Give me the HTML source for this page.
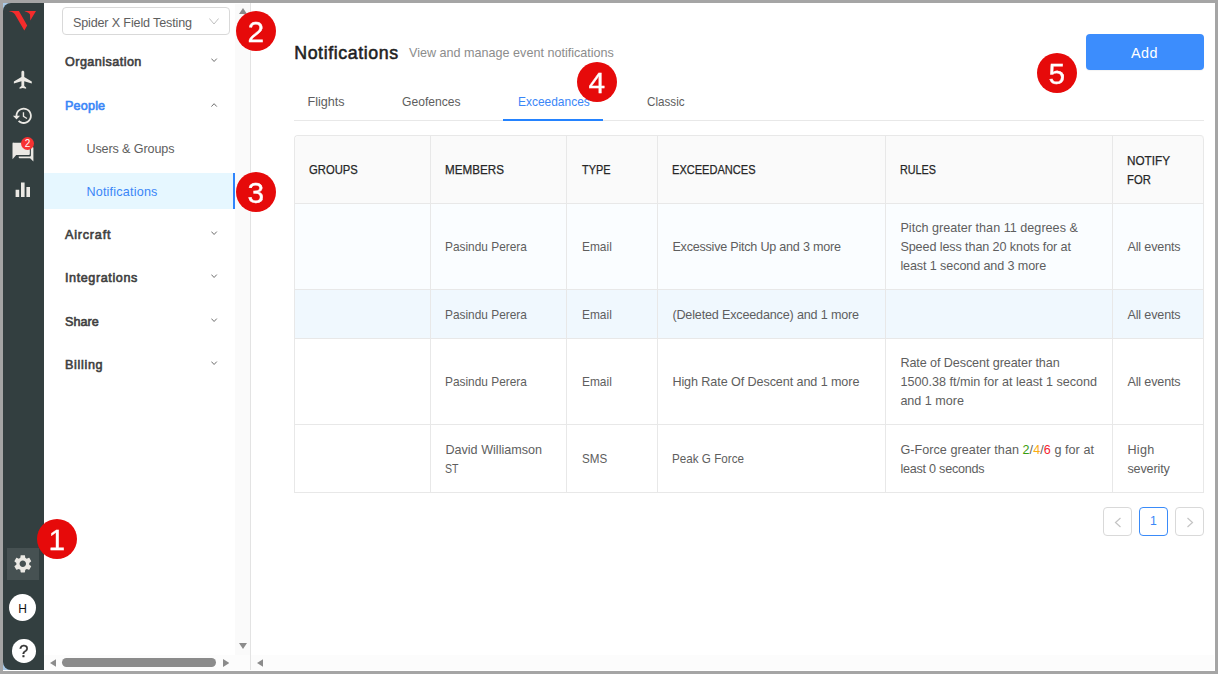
<!DOCTYPE html>
<html lang="en">
<head>
<meta charset="utf-8">
<title>Notifications</title>
<style>
*{box-sizing:border-box;margin:0;padding:0}
html,body{width:1218px;height:674px;overflow:hidden;background:#a5a5a5}
body{position:relative;font-family:"Liberation Sans",Arial,sans-serif;font-size:12.6px;line-height:18px;color:#5e5e5e}
.win{position:absolute;left:3px;top:3px;width:1212px;height:668px;background:#fff;overflow:hidden}
.pg{position:absolute;left:-3px;top:-3px;width:1218px;height:674px}
h1.t{-webkit-text-stroke:.55px #1f1f1f}
strong.t{-webkit-text-stroke:.6px currentColor}
.t{position:absolute;white-space:nowrap;line-height:18px;font-weight:400;font-size:12.6px;margin:0}
/* dark icon rail */
.cornerbg{position:absolute;left:3px;top:3px;width:12px;height:667px;background:#a8c9e6}
.rail{position:absolute;left:3px;top:3px;width:41px;height:667px;background:#333f40;border-radius:8px 0 0 8px}
.ic{position:absolute;fill:#ebe9e4}
.gearbox{position:absolute;left:7px;top:548px;width:32px;height:32px;background:#465152}
.badge{position:absolute;left:20.9px;top:136.7px;width:13.4px;height:13.4px;border-radius:50%;background:#f83232;color:#fff;font-size:10px;line-height:13.6px;text-align:center}
.ava{position:absolute;left:9px;top:594px;width:27px;height:27px;border-radius:50%;background:#fff;color:#111;font-size:12px;line-height:31px;text-align:center}
.help{will-change:transform;position:absolute;left:11.8px;top:638.7px;width:23.5px;height:23.5px;border-radius:50%;background:#fff;color:#333;font-size:17px;line-height:25px;text-align:center;-webkit-text-stroke:.3px #333}
/* side menu */
.menu{position:absolute;left:44px;top:3px;width:191px;height:652px;background:#fff}
.select{position:absolute;left:62px;top:7px;width:168px;height:28px;border:1px solid #d9d9d9;border-radius:4px;background:#fff}
.sel{position:absolute;left:44px;top:173px;width:191px;height:36px;background:#e6f7ff}
.selbar{position:absolute;left:233px;top:173px;width:2px;height:36px;background:#2f84fc}
.chev{position:absolute;fill:none;stroke:#666;stroke-width:.95}
ul{list-style:none}
/* scrollbars */
.vtrack{position:absolute;left:235px;top:4px;width:15px;height:666px;background:#fafafa}
.htrack{position:absolute;left:44px;top:655px;width:206px;height:15px;background:#fcfcfc}
.htrack2{position:absolute;left:251px;top:655px;width:963px;height:15px;background:#fcfcfc}
.thumb{position:absolute;left:62px;top:658px;width:154px;height:9px;border-radius:5px;background:#8b8b8b}
.arr{position:absolute;fill:#8b8b8b}
.divider{position:absolute;left:250px;top:3px;width:1px;height:667px;background:#e3e3e3}
/* numbered callouts */
.co{will-change:transform;position:absolute;width:40px;height:40px;border-radius:50%;background:#e60a0a;color:#fff;font-size:29.9px;line-height:40px;text-align:center;-webkit-text-stroke:.3px #fff}
.co i{display:block;font-style:normal;transform:translate(-.15px,.55px)}
/* main */
.tabline{position:absolute;left:294px;top:120px;width:910px;height:1px;background:#e8e8e8}
.ink{position:absolute;left:503px;top:119px;width:100px;height:2px;background:#2483ff}
.btn{position:absolute;left:1086px;top:34px;width:118px;height:36px;border-radius:4px;background:#3c8dfd;box-shadow:0 1px 1px rgba(0,0,0,.05)}
table{position:absolute;left:294px;top:135px;width:910px;border-collapse:separate;border-spacing:0;table-layout:fixed;border-left:1px solid #e8e8e8;border-top:1px solid #e8e8e8;border-radius:4px 4px 0 0}
th,td{border-right:1px solid #e8e8e8;border-bottom:1px solid #e8e8e8;padding:2px 0 0 14.4px;text-align:left;vertical-align:middle;font-weight:400;line-height:18.9px;white-space:nowrap;font-size:12.6px}
th{background:#fafafa;color:#262626;font-size:12.9px;-webkit-text-stroke:.25px #262626}
th:nth-child(3),td:nth-child(3){padding-left:15px}
th:first-child{border-top-left-radius:4px}
th:last-child{border-top-right-radius:4px}
tr.r1 td{background:#fafdff}
tr.r2 td{background:#f0f8fe}
.pgb{position:absolute;top:507px;width:29px;height:29px;border:1px solid #d9d9d9;border-radius:4px;background:#fff}
.pgb.on{border-color:#3a8bf9}
.pgb svg{position:absolute;left:9px;top:8.5px;fill:none;stroke:#c4c4c4;stroke-width:1.2}
b{font-weight:400}
.g{color:#389e0d}.o{color:#faad14}.r{color:#f5222d}
</style>
</head>
<body>
<div class="win"><div class="pg">

<!-- ICON RAIL -->
<div class="cornerbg"></div>
<nav>
<div class="rail"></div>
<svg class="ic" style="left:3px;top:3px" width="41" height="40" viewBox="0 0 41 40"><path fill="#f52c2c" d="M6.2 7.9h9.7l8.3 14.500-2.900 5.200-9.300-16.200q-1.200-2.200-5.800-3.200zM21.700 7.900h11.300l-5.700 9.500-.3-5.800q-.8-1.900-5.300-3.300z"/></svg>
<svg class="ic" style="left:12.2px;top:68.9px" width="22.6" height="21.6" viewBox="0 0 24 24" preserveAspectRatio="none"><path d="M21 16v-2l-8-5V3.500c0-.83-.67-1.500-1.500-1.500S10 2.670 10 3.500V9l-8 5v2l8-2.500V19l-2 1.500V22l3.500-1 3.500 1v-1.500L13 19v-5.500l8 2.500z"/></svg>
<svg class="ic" style="left:12.4px;top:105px" width="21.6" height="21.6" viewBox="0 0 24 24"><path d="M13 3c-4.970 0-9 4.030-9 9H1l3.890 3.890.07.140L9 12H6c0-3.870 3.130-7 7-7s7 3.130 7 7-3.130 7-7 7c-1.930 0-3.680-.79-4.940-2.060l-1.420 1.420C8.270 19.990 10.510 21 13 21c4.970 0 9-4.030 9-9s-4.030-9-9-9zm-1 5v5l4.280 2.540.72-1.210-3.500-2.080V8H12z"/></svg>
<svg class="ic" style="left:8px;top:136px" width="30" height="30" viewBox="0 0 30 30"><path d="M5.800 6.700h15a1 1 0 0 1 1 1v10.400a1 1 0 0 1-1 1H8.200l-3.700 4.100V7.700a1 1 0 0 1 1.300-1zM22.900 11h1.500a1 1 0 0 1 1 1v13.600l-3.300-3.300H11.700a1 1 0 0 1-1-1v-.9h11.200a1 1 0 0 0 1-1z"/></svg>
<div class="badge">2</div>
<svg class="ic" style="left:12.1px;top:178.8px" width="21.6" height="21.6" viewBox="0 0 24 24"><path d="M10 20h4V4h-4v16zm-6 0h4v-8H4v8zM16 9v11h4V9h-4z"/></svg>
<div class="gearbox"></div>
<svg class="ic" style="left:11.9px;top:553px" width="21.6" height="21.6" viewBox="0 0 24 24"><path d="M19.140 12.940c.04-.3.060-.61.060-.94 0-.32-.02-.64-.07-.94l2.030-1.580c.18-.14.230-.41.120-.61l-1.920-3.320c-.12-.22-.37-.29-.59-.22l-2.390.96c-.5-.38-1.030-.7-1.620-.94l-.36-2.540c-.04-.24-.24-.41-.48-.41h-3.840c-.24 0-.43.170-.47.410l-.36 2.540c-.59.240-1.130.57-1.620.94l-2.390-.96c-.22-.08-.47 0-.59.220L2.740 8.870c-.12.210-.08.470.12.610l2.030 1.580c-.05.300-.09.630-.09.940s.02.640.07.940l-2.030 1.580c-.18.140-.23.410-.12.610l1.920 3.320c.12.220.37.290.59.220l2.390-.96c.5.380 1.030.7 1.620.94l.36 2.540c.05.240.24.410.48.410h3.840c.24 0 .44-.17.470-.41l.36-2.540c.59-.24 1.130-.56 1.620-.94l2.390.96c.22.080.47 0 .59-.22l1.920-3.320c.12-.22.070-.47-.12-.61l-2.010-1.580zM12 15.600c-1.980 0-3.600-1.620-3.600-3.600s1.620-3.600 3.600-3.600 3.600 1.620 3.600 3.600-1.620 3.600-3.600 3.600z"/></svg>
<div class="ava">H</div>
<div class="help">?</div>
</nav>

<!-- SIDE MENU -->
<aside>
<div class="menu"></div>
<div class="select"></div>
<span class="t" style="left:72.9px;top:14px;letter-spacing:-0.15px;">Spider X Field Testing</span>
<svg class="chev" style="left:208.5px;top:18px;stroke:#bfbfbf;stroke-width:1" width="10" height="7" viewBox="0 0 10 7"><polyline points="0.4,0.5 5,6 9.600,0.5"/></svg>
<ul>
<li><strong class="t" style="left:65.0px;top:53px;letter-spacing:0.45px;color:#404040;">Organisation</strong><svg class="chev" style="left:211.4px;top:58.0px" width="6.2" height="4.2" viewBox="0 0 6.2 4.2"><polyline points="0.4,0.6 3.1,3.5 5.8,0.6"/></svg></li>
<li><strong class="t" style="left:65.0px;top:97px;letter-spacing:0.18px;color:#3a86f7;">People</strong><svg class="chev" style="left:211.4px;top:102.6px" width="6.2" height="4.2" viewBox="0 0 6.2 4.2"><polyline points="0.4,3.6 3.1,0.7 5.8,3.6"/></svg>
 <ul>
 <li><span class="t" style="left:86.4px;top:140px;letter-spacing:-0.11px;">Users &amp; Groups</span></li>
 <li><div class="sel"></div><div class="selbar"></div><span class="t" style="left:86.4px;top:183px;letter-spacing:0.20px;color:#3a86f7;">Notifications</span></li>
 </ul></li>
<li><strong class="t" style="left:65.0px;top:226px;letter-spacing:0.79px;color:#404040;">Aircraft</strong><svg class="chev" style="left:211.4px;top:231.0px" width="6.2" height="4.2" viewBox="0 0 6.2 4.2"><polyline points="0.4,0.6 3.1,3.5 5.8,0.6"/></svg></li>
<li><strong class="t" style="left:65.0px;top:269px;letter-spacing:0.59px;color:#404040;">Integrations</strong><svg class="chev" style="left:211.4px;top:274.4px" width="6.2" height="4.2" viewBox="0 0 6.2 4.2"><polyline points="0.4,0.6 3.1,3.5 5.8,0.6"/></svg></li>
<li><strong class="t" style="left:65.0px;top:313px;letter-spacing:0.02px;color:#404040;">Share</strong><svg class="chev" style="left:211.4px;top:317.6px" width="6.2" height="4.2" viewBox="0 0 6.2 4.2"><polyline points="0.4,0.6 3.1,3.5 5.8,0.6"/></svg></li>
<li><strong class="t" style="left:65.0px;top:356px;letter-spacing:0.67px;color:#404040;">Billing</strong><svg class="chev" style="left:211.4px;top:360.8px" width="6.2" height="4.2" viewBox="0 0 6.2 4.2"><polyline points="0.4,0.6 3.1,3.5 5.8,0.6"/></svg></li>
</ul>
<div class="vtrack"></div>
<div class="htrack"></div>
<svg class="arr" style="left:238.5px;top:7.8px" width="8" height="6" viewBox="0 0 8 6"><path d="M4 0l4 6H0z"/></svg>
<svg class="arr" style="left:238.5px;top:643.3px" width="8" height="6" viewBox="0 0 8 6"><path d="M0 0h8L4 6z"/></svg>
<svg class="arr" style="left:49.6px;top:658.5px" width="6.5" height="8" viewBox="0 0 6.500 8"><path d="M0 4l6.500-4v8z"/></svg>
<svg class="arr" style="left:222.7px;top:658.5px" width="6.5" height="8" viewBox="0 0 6.500 8"><path d="M6.500 4L0 0v8z"/></svg>
<div class="thumb"></div>
</aside>
<div class="divider"></div>

<!-- MAIN -->
<main>
<h1 class="t" style="left:294.2px;top:44px;letter-spacing:0.60px;font-size:17.8px;color:#1f1f1f;">Notifications</h1>
<span class="t" style="left:409.0px;top:44px;letter-spacing:0.00px;color:#8c8c8c;">View and manage event notifications</span>
<div class="btn"></div><span class="t" style="left:1130.9px;top:44px;letter-spacing:0.50px;font-size:14.4px;color:#fff;">Add</span>
<div class="tabline"></div><div class="ink"></div>
<span class="t" style="left:307.6px;top:93px;letter-spacing:-0.03px;">Flights</span><span class="t" style="left:401.7px;top:93px;display:inline-block;transform:scaleX(0.962);transform-origin:0 50%;">Geofences</span><span class="t" style="left:517.7px;top:93px;display:inline-block;transform:scaleX(0.949);transform-origin:0 50%;color:#3a86f7;">Exceedances</span><span class="t" style="left:646.6px;top:93px;display:inline-block;transform:scaleX(0.926);transform-origin:0 50%;">Classic</span>
<table>
<colgroup><col style="width:136px"><col style="width:136px"><col style="width:91px"><col style="width:228px"><col style="width:227px"><col style="width:91px"></colgroup>
<thead><tr style="height:68px"><th><span style="display:inline-block;transform:scaleX(0.873);transform-origin:0 50%">GROUPS</span></th><th><span style="display:inline-block;transform:scaleX(0.904);transform-origin:0 50%">MEMBERS</span></th><th><span style="display:inline-block;transform:scaleX(0.846);transform-origin:0 50%">TYPE</span></th><th><span style="display:inline-block;transform:scaleX(0.858);transform-origin:0 50%">EXCEEDANCES</span></th><th><span style="display:inline-block;transform:scaleX(0.838);transform-origin:0 50%">RULES</span></th><th><span style="display:inline-block;transform:scaleX(0.910);transform-origin:0 50%">NOTIFY</span><br><span style="display:inline-block;transform:scaleX(0.874);transform-origin:0 50%">FOR</span></th></tr></thead>
<tbody>
<tr class="r1" style="height:86px"><td></td><td><span style="display:inline-block;transform:scaleX(0.943);transform-origin:0 50%">Pasindu Perera</span></td><td><span style="display:inline-block;transform:scaleX(0.946);transform-origin:0 50%">Email</span></td><td><span style="letter-spacing:-0.23px">Excessive Pitch Up and 3 more</span></td><td><span style="letter-spacing:0.02px">Pitch greater than 11 degrees &amp;</span><br><span style="letter-spacing:-0.10px">Speed less than 20 knots for at</span><br><span style="letter-spacing:-0.11px">least 1 second and 3 more</span></td><td><span style="letter-spacing:-0.15px">All events</span></td></tr>
<tr class="r2" style="height:49px"><td></td><td><span style="display:inline-block;transform:scaleX(0.943);transform-origin:0 50%">Pasindu Perera</span></td><td><span style="display:inline-block;transform:scaleX(0.946);transform-origin:0 50%">Email</span></td><td><span style="letter-spacing:-0.17px">(Deleted Exceedance) and 1 more</span></td><td></td><td><span style="letter-spacing:-0.15px">All events</span></td></tr>
<tr class="r3" style="height:86px"><td></td><td><span style="display:inline-block;transform:scaleX(0.943);transform-origin:0 50%">Pasindu Perera</span></td><td><span style="display:inline-block;transform:scaleX(0.946);transform-origin:0 50%">Email</span></td><td><span style="letter-spacing:-0.09px">High Rate Of Descent and 1 more</span></td><td><span style="letter-spacing:-0.09px">Rate of Descent greater than</span><br><span style="letter-spacing:0.00px">1500.38 ft/min for at least 1 second</span><br><span style="letter-spacing:-0.02px">and 1 more</span></td><td><span style="letter-spacing:-0.15px">All events</span></td></tr>
<tr class="r4" style="height:68px"><td></td><td><span style="letter-spacing:0.01px">David Williamson</span><br><span style="display:inline-block;transform:scaleX(0.839);transform-origin:0 50%">ST</span></td><td><span style="display:inline-block;transform:scaleX(0.923);transform-origin:0 50%">SMS</span></td><td><span style="display:inline-block;transform:scaleX(0.927);transform-origin:0 50%">Peak G Force</span></td><td><span style="letter-spacing:0.05px">G-Force greater than <b class="g">2</b>/<b class="o">4</b>/<b class="r">6</b> g for at</span><br><span style="letter-spacing:-0.24px">least 0 seconds</span></td><td><span style="letter-spacing:0.33px">High</span><br><span style="letter-spacing:-0.13px">severity</span></td></tr>
</tbody></table>
<div class="pgb" style="left:1103px"><svg width="10" height="11" viewBox="0 0 10 11"><polyline points="7.500,1 2.500,5.500 7.500,10"/></svg></div>
<div class="pgb on" style="left:1139px"></div><span class="t" style="left:1149.6px;top:512px;display:inline-block;transform:scaleX(0.969);transform-origin:0 50%;color:#3a86f7;">1</span>
<div class="pgb" style="left:1175px"><svg width="10" height="11" viewBox="0 0 10 11"><polyline points="2.500,1 7.500,5.500 2.500,10"/></svg></div>
<div class="htrack2"></div>
<svg class="arr" style="left:256.5px;top:658.5px" width="6.5" height="8" viewBox="0 0 6.500 8"><path d="M0 4l6.500-4v8z"/></svg>
</main>
<div class="co" style="left:37px;top:519px"><i>1</i></div><div class="co" style="left:236px;top:11px"><i>2</i></div><div class="co" style="left:236px;top:172px"><i>3</i></div><div class="co" style="left:577px;top:62px"><i>4</i></div><div class="co" style="left:1037px;top:53px"><i>5</i></div>

</div></div>
</body>
</html>
